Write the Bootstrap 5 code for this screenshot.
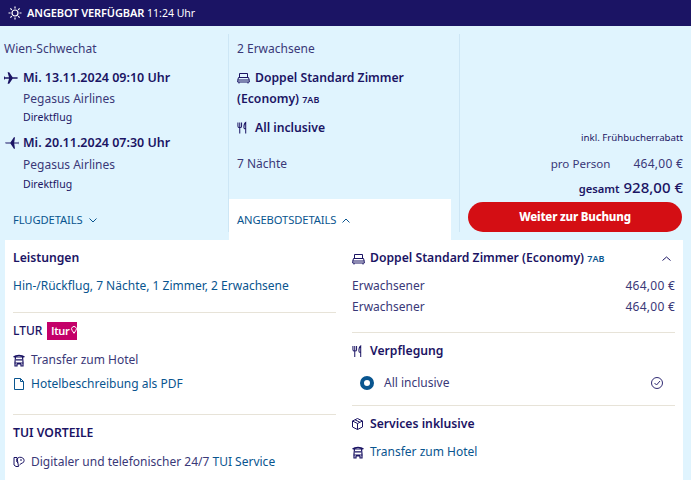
<!doctype html>
<html lang="de">
<head>
<meta charset="utf-8">
<title>Angebot</title>
<link href="https://cdn.jsdelivr.net/npm/bootstrap@5.3.0/dist/css/bootstrap.min.css" rel="stylesheet">
<style>
html,body{height:480px;overflow:hidden}
body{background:#e0f4fe;font-family:"Noto Sans","Open Sans",sans-serif;font-size:12px;color:#1b1464;line-height:20px}
svg{flex:none;display:block}
.topbar{height:26px;background:#1b1464;color:#fff;padding-left:8px;gap:5px;font-size:11px}
.topbar b{font-weight:600;letter-spacing:-.1px}
.clock{font-size:10.5px}
.summary{height:214px}
.cola,.colb{margin:8px 0;padding-top:5px;border-right:1px solid #cde6f5}
.cola{width:229px;padding-left:4px}
.colb{width:231px}
.colc{flex:1;padding-right:8px}
.inkl{font-size:9.700px;margin-top:102px}
.txt{color:#3a3878}
.strong{font-weight:600;font-size:12.2px;color:#1b1464}
.date{font-size:12.5px}
.tiny{font-size:10.5px}
.smallcode{font-size:9px;font-weight:600;color:#1b1464}
.ind{padding-left:19px}
.linkup{color:#09558f;font-size:11.2px;letter-spacing:-.1px;gap:6px}
.tabwhite{background:#fff;width:222px;height:41px;padding:11px 0 0 8px}
.cta{width:214px;height:30px;border-radius:15px;background:#d40e14;color:#fff;font-weight:800;font-size:11.500px;border:0;margin:3px 1px 0 auto;display:block;padding:0;letter-spacing:-.2px}
.panel{background:#fff;margin:0 8px 0 5px;height:240px;padding:8px 8px 0 8px;gap:16px}
.pl,.pr{width:323px}
.rule{border-top:1px solid #e7e3d8;margin:0;opacity:1}
.tag{background:#c40069;color:#fff;font-size:11px;font-weight:600;width:30px;height:18px;line-height:18px;letter-spacing:-.3px;padding-left:4px;gap:1px}
.ltur{font-weight:500;gap:5px}
.blue{color:#09558f}
.radio-o{width:14px;height:14px;border:4px solid #09558f;border-radius:50%;background:#fff}
.gapa{gap:5px}
.gapb{gap:6px}
.gapc{gap:7px}
.docicon{margin-left:1px}
.perperson{font-size:11.6px}
.money{letter-spacing:.25px}
.sumlabel{font-size:11.200px}
.total{font-size:15px;font-weight:500}
</style>
</head>
<body>
<div class="topbar d-flex align-items-center">
  <svg width="14" height="14" viewBox="0 0 14 14" fill="none" stroke="#fff" stroke-width="1.2"><circle cx="7" cy="7" r="3"/><path d="M7 .5v2M7 11.500v2M.5 7h2M11.500 7h2M2.400 2.400l1.400 1.400M10.200 10.200l1.400 1.400M2.400 11.600l1.400-1.400M10.200 3.800l1.400-1.400"/></svg>
  <span><b>ANGEBOT VERFÜGBAR</b> <span class="clock">11:24 Uhr</span></span>
</div>
<div class="summary d-flex">
  <div class="cola">
    <div class="txt">Wien-Schwechat</div>
    <div class="d-flex align-items-center strong date gap-1" style="margin-top:9px">
      <svg width="15" height="14" viewBox="0 0 15 14" fill="#1b1464"><path d="M1 6.200h4L3.600 1.200h1.600L8.600 6.200h3.600c1 0 1.800.3 1.800.8s-.8.8-1.800.8H8.600L5.200 12.800H3.600L5 7.800H1L0 9V5z"/></svg>
      <span>Mi. 13.11.2024 09:10 Uhr</span>
    </div>
    <div class="ind txt" style="margin-top:1px">Pegasus Airlines</div>
    <div class="ind tiny" style="margin-top:-2px">Direktflug</div>
    <div class="d-flex align-items-center strong date gap-1" style="margin-top:6px">
      <svg width="15" height="14" viewBox="0 0 15 14" fill="#1b1464"><path d="M14 6.600h-3.800L11 1.200H9.900L6.400 6.600H2.800C1.800 6.600 1 6.700 1 7s.8.400 1.800.400h3.600l3.500 5.400H11l-.8-5.400H14l.6 1.200V5.400z"/></svg>
      <span>Mi. 20.11.2024 07:30 Uhr</span>
    </div>
    <div class="ind txt" style="margin-top:2px">Pegasus Airlines</div>
    <div class="ind tiny" style="margin-top:-1px">Direktflug</div>
    <div class="linkup d-flex align-items-center" style="margin:16px 0 0 9px">FLUGDETAILS
      <svg width="8" height="5" viewBox="0 0 8 5" fill="none" stroke="#09558f"><path d="M.5.5 4 4 7.500.5"/></svg>
    </div>
  </div>
  <div class="colb d-flex flex-column">
    <div class="ps-2 txt">2 Erwachsene</div>
    <div class="ps-2 strong d-flex align-items-center gapa" style="margin-top:9px">
      <svg width="13" height="12" viewBox="0 0 13 12" fill="none" stroke="#1b1464"><path d="M2.500 5V1.500h8V5M1.500 5.500h10l.8 3v1.500H.7V8.500zM.7 8h11.600M2 10v1.500M11 10v1.500"/></svg>
      <span>Doppel Standard Zimmer</span>
    </div>
    <div class="ps-2 strong" style="margin-top:1px">(Economy) <span class="smallcode">7AB</span></div>
    <div class="ps-2 strong d-flex align-items-center gapc" style="margin-top:8px">
      <svg width="11" height="14" viewBox="0 0 12 14" fill="none" stroke="#1b1464" stroke-width="1.100"><path d="M1 1v4c0 1 1 1.500 2 1.500S5 6 5 5V1M3 1v12M9.500 13V1C8 2 7.500 4 7.500 6.500c0 1 .8 1.500 2 1.500"/></svg>
      <span>All inclusive</span>
    </div>
    <div class="ps-2 txt" style="margin-top:16px">7 Nächte</div>
    <div class="tabwhite linkup d-flex align-items-start mt-auto" style="margin-bottom:-8px">ANGEBOTSDETAILS
      <svg class="mt-2" width="8" height="5" viewBox="0 0 8 5" fill="none" stroke="#09558f"><path d="M.5 4.500 4 1l3.500 3.500"/></svg>
    </div>
  </div>
  <div class="colc text-end">
    <div class="inkl">inkl. Frühbucherrabatt</div>
    <div class="d-flex justify-content-end txt" style="margin-top:6px;gap:23px"><span class="perperson">pro Person</span><span class="money">464,00 €</span></div>
    <div class="d-flex justify-content-end align-items-baseline gap-1 strong" style="margin-top:3px"><span class="sumlabel">gesamt</span><span class="total">928,00 €</span></div>
    <button type="button" class="btn cta">Weiter zur Buchung</button>
  </div>
</div>
<div class="panel d-flex">
  <div class="pl">
    <div class="strong">Leistungen</div>
    <div class="blue" style="margin-top:8px">Hin-/Rückflug, 7 Nächte, 1 Zimmer, 2 Erwachsene</div>
    <hr class="rule" style="margin-top:16px">
    <div class="d-flex align-items-center ltur" style="margin-top:8px"><span>LTUR</span>
      <span class="tag d-flex"><span>ltur</span>
        <svg class="mt-1" width="6" height="8" viewBox="0 0 6 8" fill="none" stroke="#fff"><path d="M3 7.300 1 4.200a2.400 2.400 0 1 1 4 0z"/></svg>
      </span>
    </div>
    <div class="d-flex align-items-center txt gapb" style="margin-top:9px">
      <svg width="12" height="13" viewBox="0 0 12 13" fill="none" stroke="#1b1464" stroke-width="1.200"><path d="M.5 3C3 .8 9 .8 11.500 3M2.500 3h7l.6 6H1.900zM3 5.800h6M2 9v3h2V10M10 9v3H8V10M4 10h4"/></svg>
      <span>Transfer zum Hotel</span>
    </div>
    <div class="d-flex align-items-center blue gapc" style="margin-top:4px">
      <svg class="docicon" width="10" height="12" viewBox="0 0 10 12" fill="none" stroke="#09558f"><path d="M.5.5h6l3 3v8H.5zM6.500.5v3h3"/></svg>
      <span>Hotelbeschreibung als PDF</span>
    </div>
    <hr class="rule" style="margin-top:20px">
    <div class="strong" style="margin-top:8px">TUI VORTEILE</div>
    <div class="d-flex align-items-center txt gapa" style="margin-top:9px">
      <svg width="13" height="13" viewBox="0 0 13 13" fill="none" stroke="#1b1464"><path d="M1 1.500h3l1.500 9H3l-2-1.500zM5 7a3.800 3.200 0 1 1 3 .6L6.500 9M8 3v2"/></svg>
      <span>Digitaler und telefonischer 24/7 <span class="blue">TUI Service</span></span>
    </div>
  </div>
  <div class="pr">
    <div class="d-flex align-items-center strong">
      <svg class="ms-0" width="13" height="12" viewBox="0 0 13 12" fill="none" stroke="#1b1464"><path d="M2.500 5V1.500h8V5M1.500 5.500h10l.8 3v1.500H.7V8.500zM.7 8h11.600M2 10v1.500M11 10v1.500"/></svg>
      <span style="margin-left:5px">Doppel Standard Zimmer (Economy) <span class="smallcode blue">7AB</span></span>
      <svg class="ms-auto me-1" width="9" height="5" viewBox="0 0 9 5" fill="none" stroke="#1b1464"><path d="M.5 4.500 4.500 1l4 3.500"/></svg>
    </div>
    <div class="d-flex justify-content-between txt" style="margin-top:7px"><span>Erwachsener</span><span class="money">464,00 €</span></div>
    <div class="d-flex justify-content-between txt" style="margin-top:1px"><span>Erwachsener</span><span class="money">464,00 €</span></div>
    <hr class="rule" style="margin-top:15px">
    <div class="d-flex align-items-center strong gapc" style="margin-top:8px">
      <svg width="11" height="13" viewBox="0 0 12 14" fill="none" stroke="#1b1464" stroke-width="1.100"><path d="M1 1v4c0 1 1 1.500 2 1.500S5 6 5 5V1M3 1v12M9.500 13V1C8 2 7.500 4 7.500 6.500c0 1 .8 1.500 2 1.500"/></svg>
      <span>Verpflegung</span>
    </div>
    <div class="d-flex align-items-center txt" style="margin-top:12px;padding:0 12px 0 8px;gap:10px">
      <span class="radio-o"></span><span>All inclusive</span>
      <svg class="ms-auto" width="12" height="12" viewBox="0 0 12 12" fill="none" stroke="#1b1464" stroke-width=".9"><circle cx="6" cy="6" r="5.500"/><path d="m3.500 6 2 2 3.500-4"/></svg>
    </div>
    <hr class="rule" style="margin-top:12px">
    <div class="d-flex align-items-center strong gapc" style="margin-top:8px">
      <svg width="11" height="12" viewBox="0 0 11 12" fill="none" stroke="#1b1464"><path d="M5.500.5 10.500 3v6l-5 2.500-5-2.500V3zM.5 3l5 2.500L10.500 3M5.500 5.500v6M3 1.800l5 2.500"/></svg>
      <span>Services inklusive</span>
    </div>
    <div class="d-flex align-items-center blue gapb" style="margin-top:8px">
      <svg width="12" height="13" viewBox="0 0 12 13" fill="none" stroke="#1b1464" stroke-width="1.200"><path d="M.5 3C3 .8 9 .8 11.500 3M2.500 3h7l.6 6H1.900zM3 5.800h6M2 9v3h2V10M10 9v3H8V10M4 10h4"/></svg>
      <span>Transfer zum Hotel</span>
    </div>
  </div>
</div>
<script src="https://cdn.jsdelivr.net/npm/bootstrap@5.3.0/dist/js/bootstrap.bundle.min.js"></script>
</body>
</html>
